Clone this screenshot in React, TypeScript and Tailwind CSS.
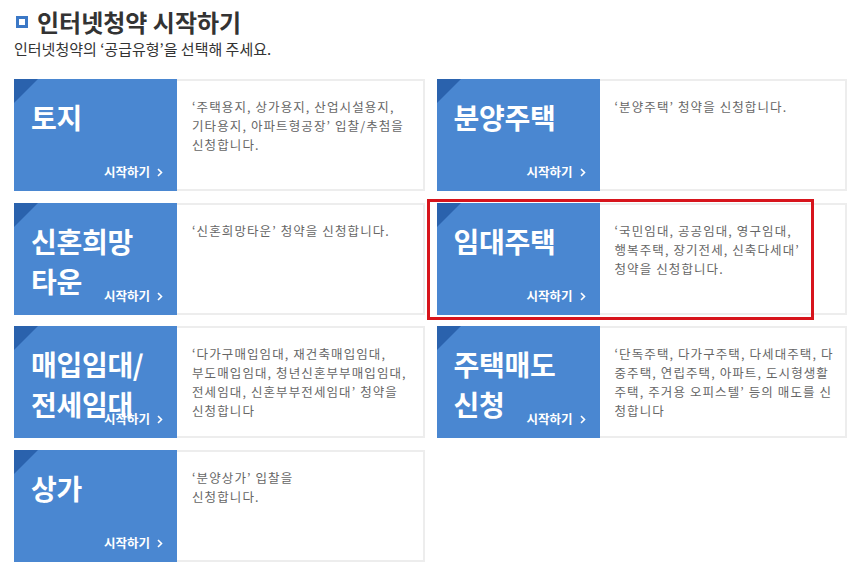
import { ReactNode } from "react";

type Item = {
  title: ReactNode;
  lines: string[];
  highlight?: boolean;
};

const items: Item[] = [
  {
    title: "토지",
    lines: ["‘주택용지, 상가용지, 산업시설용지,", "기타용지, 아파트형공장’ 입찰/추첨을", "신청합니다."],
  },
  { title: "분양주택", lines: ["‘분양주택’ 청약을 신청합니다."] },
  {
    title: (
      <>
        신혼희망
        <br />
        타운
      </>
    ),
    lines: ["‘신혼희망타운’ 청약을 신청합니다."],
  },
  {
    title: "임대주택",
    lines: ["‘국민임대, 공공임대, 영구임대,", "행복주택, 장기전세, 신축다세대’", "청약을 신청합니다."],
    highlight: true,
  },
  {
    title: (
      <>
        매입임대/
        <br />
        전세임대
      </>
    ),
    lines: [
      "‘다가구매입임대, 재건축매입임대,",
      "부도매입임대, 청년신혼부부매입임대,",
      "전세임대, 신혼부부전세임대’ 청약을",
      "신청합니다",
    ],
  },
  {
    title: (
      <>
        주택매도
        <br />
        신청
      </>
    ),
    lines: [
      "‘단독주택, 다가구주택, 다세대주택, 다",
      "중주택, 연립주택, 아파트, 도시형생활",
      "주택, 주거용 오피스텔’ 등의 매도를 신",
      "청합니다",
    ],
  },
  { title: "상가", lines: ["‘분양상가’ 입찰을", "신청합니다."] },
];

function Card({ item }: { item: Item }) {
  return (
    <div className="relative flex h-[112px]">
      <div className="relative w-[163px] shrink-0 bg-[#4a87d1] text-white">
        <svg className="absolute left-0 top-0" width="24" height="24" viewBox="0 0 24 24">
          <polygon points="0,0 24,0 0,24" fill="#2a62ad" />
        </svg>
        <div className="px-[17px] pt-[18px] text-[28px] font-bold leading-[40px] tracking-[-0.3px]">
          {item.title}
        </div>
        <div className="absolute bottom-[9px] right-[14px] flex items-center gap-[7px] text-[12.5px] font-bold">
          시작하기
          <svg width="6" height="9" viewBox="0 0 6 9" fill="none">
            <path d="M1 1l3.5 3.5L1 8" stroke="white" strokeWidth="1.6" />
          </svg>
        </div>
      </div>
      <div className="flex-1 border-2 border-l-0 border-[#ededed] bg-white pl-[15px] pt-[16px] text-[12.5px] leading-[19px] tracking-[1.1px] text-[#666666]">
        {item.lines.map((line) => (
          <div key={line} className="whitespace-nowrap">
            {line}
          </div>
        ))}
      </div>
      {item.highlight ? (
        <div className="pointer-events-none absolute left-[-10px] top-[-4px] h-[121px] w-[387px] border-[3px] border-[#d7141c]" />
      ) : null}
    </div>
  );
}

export default function App() {
  return (
    <div
      className="min-h-[568px] w-[860px] bg-white"
      style={{ fontFamily: '"Noto Sans CJK KR", "Noto Sans", sans-serif' }}
    >
      <div className="px-[14px] pt-[6px]">
        <h1 className="flex items-center gap-[9px] text-[24px] font-bold leading-[31px] text-[#333333]">
          <span className="ml-[2px] flex h-[12px] w-[12px] items-center justify-center bg-[#3b78c6]">
            <span className="h-[6px] w-[6px] bg-white" />
          </span>
          인터넷청약 시작하기
        </h1>
        <p className="mt-[2px] text-[15px] leading-[20px] text-[#333333]">
          인터넷청약의 ‘공급유형’을 선택해 주세요.
        </p>
      </div>
      <div className="ml-[14px] mt-[20px] grid w-[833px] grid-cols-2 gap-x-3 gap-y-[11.5px]">
        {items.map((item, i) => (
          <Card key={i} item={item} />
        ))}
      </div>
    </div>
  );
}
